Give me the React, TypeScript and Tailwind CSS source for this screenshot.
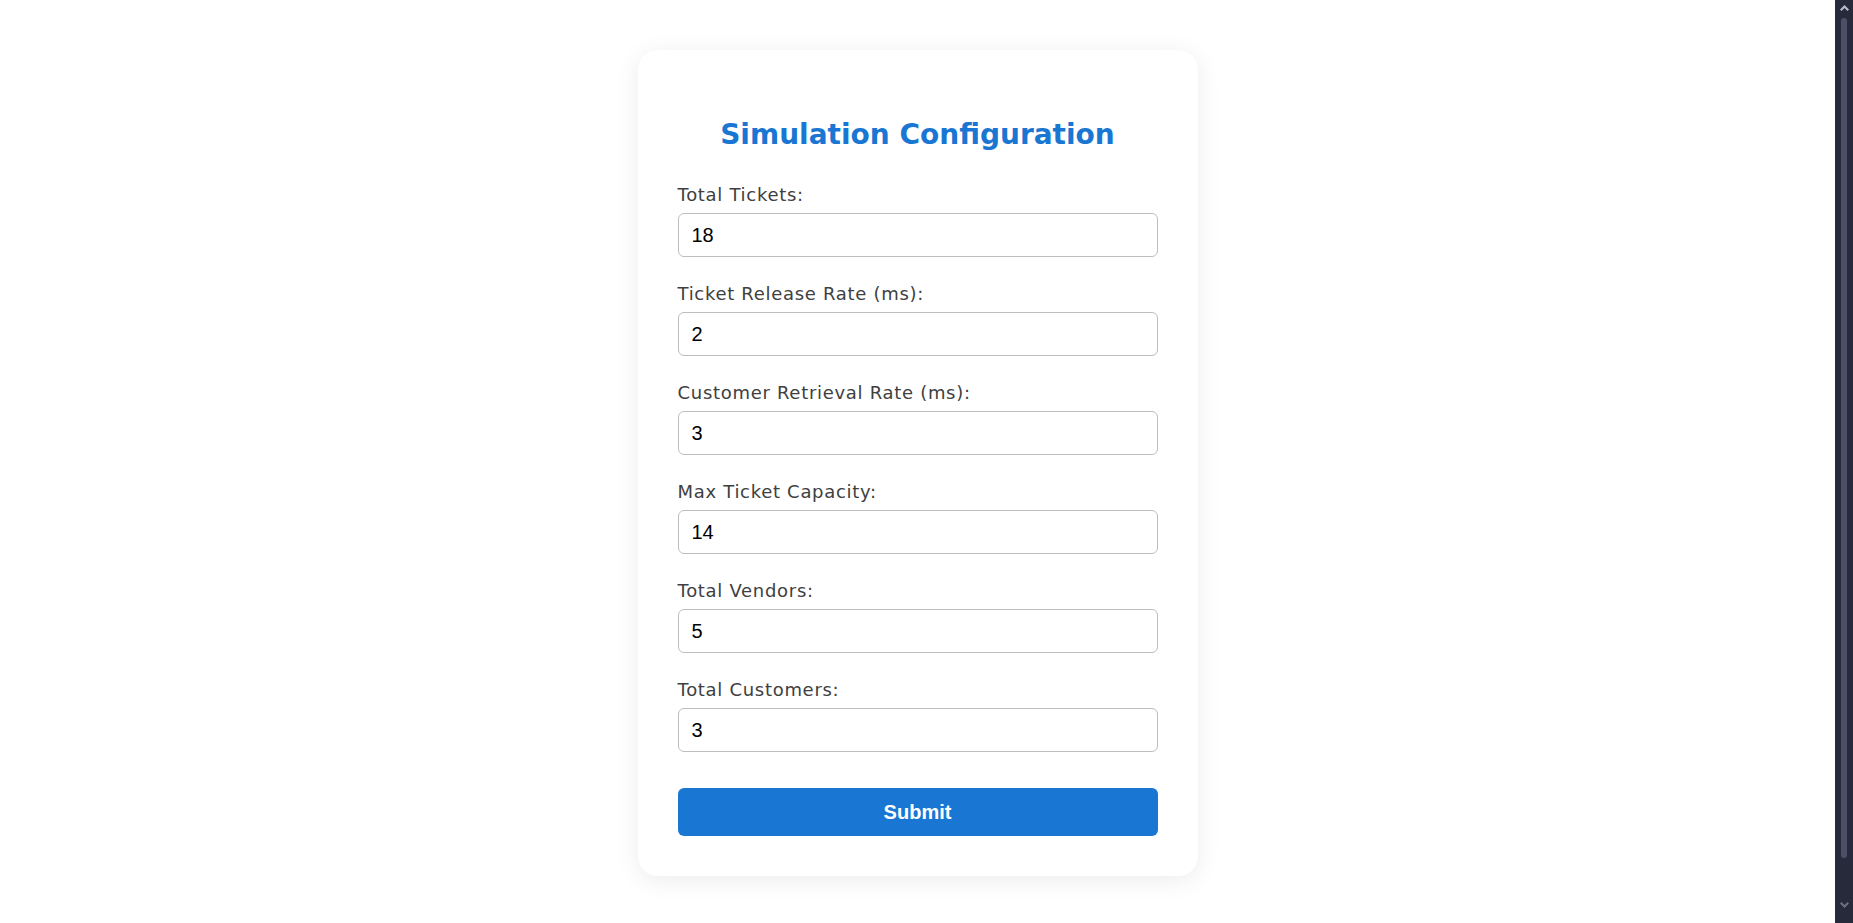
import { useState } from "react";

type Field = {
    key: string;
    label: string;
    value: string;
};

const initialFields: Field[] = [
    { key: "totalTickets", label: "Total Tickets:", value: "18" },
    { key: "ticketReleaseRate", label: "Ticket Release Rate (ms):", value: "2" },
    { key: "customerRetrievalRate", label: "Customer Retrieval Rate (ms):", value: "3" },
    { key: "maxTicketCapacity", label: "Max Ticket Capacity:", value: "14" },
    { key: "totalVendors", label: "Total Vendors:", value: "5" },
    { key: "totalCustomers", label: "Total Customers:", value: "3" },
];

// window scrollbar drawn as in the screenshot (dark theme)
const ScrollBar = () => (
    <div className="w-[18px] h-full bg-[#262a3a] flex flex-col items-center pt-[5px] pb-[15px]">
        <svg width="9" height="6" viewBox="0 0 9 6">
            <path d="M4.5 0 L9 4.5 L7.5 6 L4.5 3 L1.5 6 L0 4.5 Z" fill="#b9bcc6" />
        </svg>
        <div className="mt-[7px] w-[6px] h-[840px] rounded-full bg-[#4b4f68]" />
        <div className="flex-1" />
        <svg width="9" height="6" viewBox="0 0 9 6">
            <path d="M4.5 6 L9 1.5 L7.5 0 L4.5 3 L1.5 0 L0 1.5 Z" fill="#6b6f80" />
        </svg>
    </div>
);

const App = () => {
    const [fields, setFields] = useState<Field[]>(initialFields);

    const updateField = (key: string, value: string) => {
        setFields(prev => prev.map(f => (f.key === key ? { ...f, value } : f)));
    };

    return (
        <div className="h-screen flex overflow-hidden bg-white">
            <div className="flex-1 overflow-hidden">
                <div className="flex justify-center py-[50px]">
                    <form
                        onSubmit={e => e.preventDefault()}
                        className="w-[560px] p-10 bg-white rounded-[20px] shadow-[0_4px_24px_rgba(0,0,0,0.08)] flex flex-col"
                    >
                        <h2 className="mt-[27px] mb-[29px] text-center text-[28px] leading-[36px] font-semibold text-[#1976d2] font-['DejaVu_Sans',sans-serif]">
                            Simulation Configuration
                        </h2>

                        {/* Fields */}
                        <div className="flex flex-col gap-[24px]">
                            {fields.map(field => (
                                <div key={field.key} className="flex flex-col">
                                    <label
                                        htmlFor={field.key}
                                        className="pt-[2px] mb-[7px] text-[18px] leading-[22px] tracking-[0.7px] text-[#404040] font-['DejaVu_Sans',sans-serif]"
                                    >
                                        {field.label}
                                    </label>
                                    <input
                                        id={field.key}
                                        type="number"
                                        value={field.value}
                                        onChange={e => updateField(field.key, e.target.value)}
                                        className="h-[44px] w-full px-[13px] border border-[#bdbdbd] rounded-[6px] text-[20px] text-black font-['Liberation_Sans',Arial,sans-serif] outline-none [appearance:textfield] [&::-webkit-inner-spin-button]:appearance-none"
                                    />
                                </div>
                            ))}
                        </div>

                        <button
                            type="submit"
                            className="mt-9 h-[48px] w-full rounded-[6px] bg-[#1976d2] text-white text-[20px] font-bold font-['Liberation_Sans',Arial,sans-serif]"
                        >
                            Submit
                        </button>
                    </form>
                </div>
            </div>
            <ScrollBar />
        </div>
    );
};

export default App;
